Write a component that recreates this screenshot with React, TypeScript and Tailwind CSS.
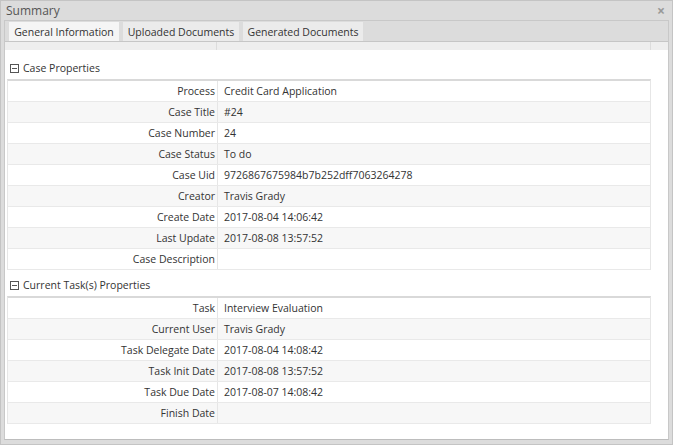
const caseProps: [string, string][] = [
  ["Process", "Credit Card Application"],
  ["Case Title", "#24"],
  ["Case Number", "24"],
  ["Case Status", "To do"],
  ["Case Uid", "9726867675984b7b252dff7063264278"],
  ["Creator", "Travis Grady"],
  ["Create Date", "2017-08-04 14:06:42"],
  ["Last Update", "2017-08-08 13:57:52"],
  ["Case Description", ""],
];

const taskProps: [string, string][] = [
  ["Task", "Interview Evaluation"],
  ["Current User", "Travis Grady"],
  ["Task Delegate Date", "2017-08-04 14:08:42"],
  ["Task Init Date", "2017-08-08 13:57:52"],
  ["Task Due Date", "2017-08-07 14:08:42"],
  ["Finish Date", ""],
];

function SectionHeader({ title }: { title: string }) {
  return (
    <div className="flex items-center h-[21px] pl-[3px] gap-[4px]">
      <span className="w-[9px] h-[9px] border border-[#555] flex items-center justify-center">
        <span className="w-[5px] h-px bg-[#555]" />
      </span>
      <span className="text-[10.5px] text-[#333]">{title}</span>
    </div>
  );
}

function PropTable({ rows }: { rows: [string, string][] }) {
  return (
    <div className="w-[644px] border-t-2 border-t-[#d9d9d9] border-x border-x-[#e6e6e6]">
      {rows.map(([label, value], i) => (
        <div
          key={label}
          className={`flex h-[21px] border-b border-[#e9e9e9] text-[10.5px] text-[#333] ${
            i % 2 === 1 ? "bg-[#f7f7f7]" : "bg-white"
          }`}
        >
          <div className="w-[210px] shrink-0 text-right pr-[2px] border-r border-[#e6e6e6] leading-[20px]">
            {label}
          </div>
          <div className="pl-[6px] leading-[20px]">{value}</div>
        </div>
      ))}
    </div>
  );
}

export default function App() {
  return (
    <div className="w-[673px] h-[445px] border border-[#c4c4c4] bg-[#dcdcdc] flex flex-col font-['Open_Sans',sans-serif]">
      {/* Title bar */}
      <div className="h-[19px] flex items-center justify-between pl-[5px] pr-[7px] shrink-0">
        <span className="text-[12px] text-[#555]">Summary</span>
        <span className="text-[14px] leading-none text-[#999] font-bold">×</span>
      </div>

      {/* Panel */}
      <div className="flex-1 px-[3px] pb-[4px] flex flex-col min-h-0">
        <div className="flex-1 flex flex-col border border-[#c8c8c8] border-b-[#bdbdbd] min-h-0">
          {/* Tabs */}
          <div className="h-[21px] flex items-end gap-[4px] pl-[4px] border-b border-[#c6c6c6] shrink-0">
            <div className="h-[19px] w-[110px] pt-[2px] bg-[#f5f5f5] flex items-center justify-center text-[10.5px] text-[#333]">
              General Information
            </div>
            <div className="h-[19px] w-[116px] pt-[2px] bg-[#ebebeb] flex items-center justify-center text-[10.5px] text-[#333]">
              Uploaded Documents
            </div>
            <div className="h-[19px] w-[120px] pt-[2px] bg-[#ebebeb] flex items-center justify-center text-[10.5px] text-[#333]">
              Generated Documents
            </div>
          </div>

          {/* Content */}
          <div className="flex-1 bg-white flex flex-col">
            <div className="h-[8px] bg-[#eeeeee] flex shrink-0">
              <div className="w-[212px] border-r border-[#dcdcdc]" />
              <div className="w-[434px] border-r border-[#dcdcdc]" />
            </div>
            <div className="pl-[2px] pt-[8px] flex flex-col">
              <SectionHeader title="Case Properties" />
              <PropTable rows={caseProps} />
              <div className="h-[5px]" />
              <SectionHeader title="Current Task(s) Properties" />
              <PropTable rows={taskProps} />
            </div>
          </div>
        </div>
      </div>
    </div>
  );
}
